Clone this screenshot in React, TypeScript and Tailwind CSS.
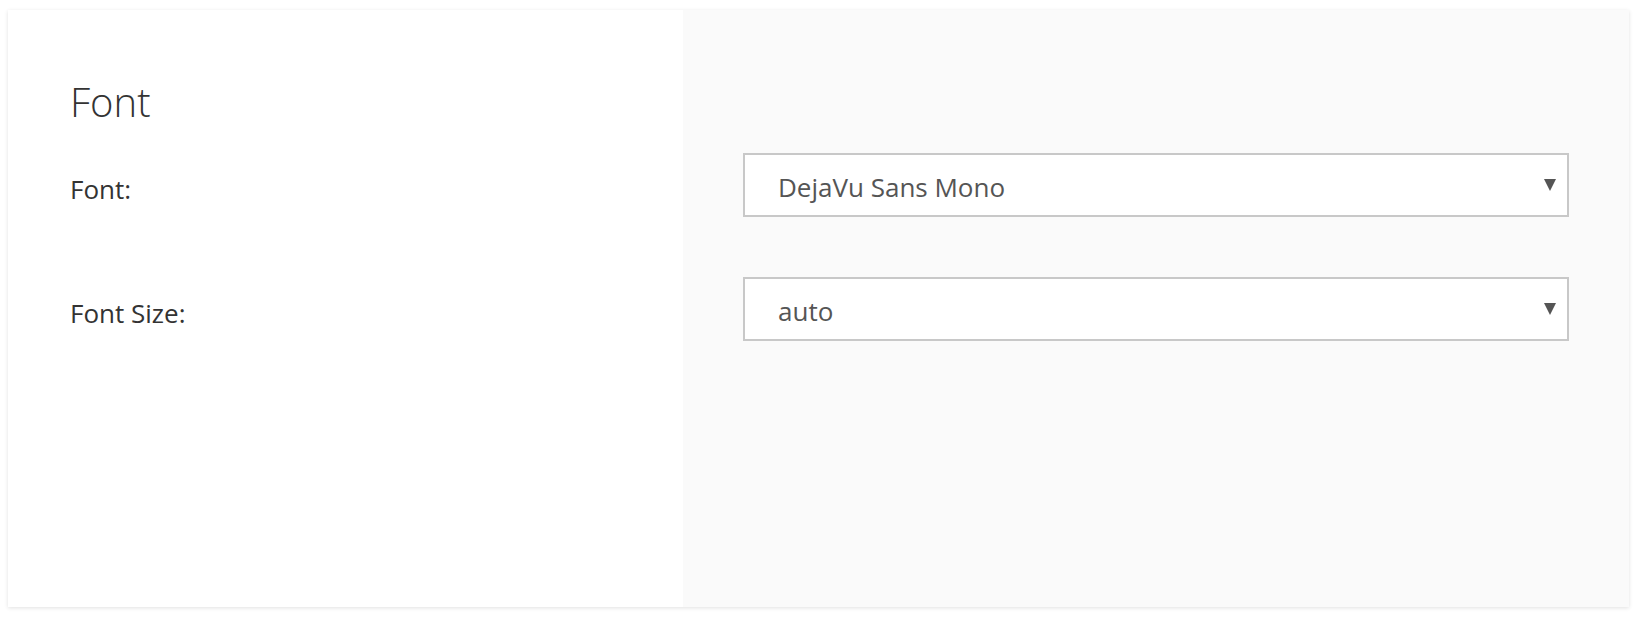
const fontStack = "font-['Open_Sans','Liberation_Sans',sans-serif]";

const SelectBox = ({ value }: { value: string }) => {
  return (
    <div className="relative h-[64px] w-full border-2 border-[#c8c8c8] bg-white pl-[33px] pt-[19px]">
      <span className="block text-[26px] leading-none text-[#555555]">{value}</span>
      {/* dropdown caret */}
      <svg
        className="absolute right-[11px] top-[24px]"
        width="12"
        height="12"
        viewBox="0 0 12 12"
      >
        <polygon points="0,0 12,0 6,12" fill="#555555" />
      </svg>
    </div>
  );
};

const App = () => {
  const rows = [
    { label: 'Font:', value: 'DejaVu Sans Mono' },
    { label: 'Font Size:', value: 'auto' },
  ];

  return (
    <div className={`min-h-[623px] w-full bg-white pl-[8px] pt-[10px] ${fontStack}`}>
      <div className="flex h-[597px] w-[1621px] bg-white shadow-[0_1px_4px_rgba(0,0,0,0.12)]">
        {/* Left: title and labels */}
        <div className="w-[675px] bg-white pl-[62px] pt-[72px]">
          <h1 className="text-[40px] font-light leading-none text-[#333333]">Font</h1>
          <div className="mt-[31px] flex flex-col gap-[60px]">
            {rows.map((row) => (
              <div key={row.label} className="h-[64px] pt-[23px]">
                <span className="block text-[26px] leading-none text-[#333333]">{row.label}</span>
              </div>
            ))}
          </div>
        </div>

        {/* Right: select boxes */}
        <div className="flex flex-1 flex-col gap-[60px] bg-[#fafafa] pl-[60px] pr-[60px] pt-[143px]">
          {rows.map((row) => (
            <SelectBox key={row.label} value={row.value} />
          ))}
        </div>
      </div>
    </div>
  );
};

export default App;
